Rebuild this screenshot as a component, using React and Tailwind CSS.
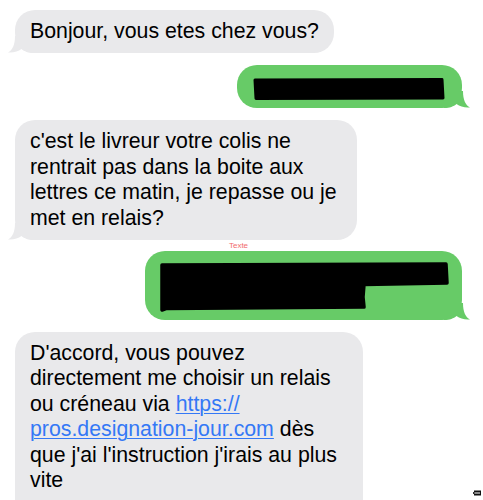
import React from 'react';

const GRAY = 'bg-[#e9e9eb]';
const GREEN = 'bg-[#67cb67]';

const Tail = ({ side, color }) => (
  <svg
    width="26"
    height="17"
    viewBox="0 0 26 17"
    className={
      side === 'left'
        ? 'absolute -left-[7px] bottom-0'
        : 'absolute -right-[8px] bottom-0 -scale-x-100'
    }
  >
    <path
      d="M7 0 C7 9 4.5 14 0 16.5 C5.5 17 10 15.5 13.5 13 C16.5 15.5 20 17 26 17 L26 0 Z"
      fill={color}
    />
  </svg>
);

const GrayBubble = ({ width, children }) => (
  <div
    className={`relative self-start rounded-[20px] ${GRAY} px-[15px] py-[9px] text-[21.3px] leading-[25.4px] text-black`}
    style={width ? { width } : undefined}
  >
    <Tail side="left" color="#e9e9eb" />
    <div className="relative">{children}</div>
  </div>
);

const GreenBubble = ({ width, height, children, pad }) => (
  <div
    className={`relative self-end rounded-[20px] ${GREEN} ${pad}`}
    style={{ width, height }}
  >
    <Tail side="right" color="#67cb67" />
    <div className="relative">{children}</div>
  </div>
);

const linkCls = 'text-[#3478f6] underline decoration-1 underline-offset-2';

export default function App() {
  return (
    <div
      className="relative h-[500px] w-full overflow-hidden bg-white"
      style={{ fontFamily: '"Liberation Sans", Arial, sans-serif' }}
    >
      <div className="flex flex-col pl-[15px] pr-[21px] pt-[10px]">
        <GrayBubble>Bonjour, vous etes chez vous?</GrayBubble>

        <div className="mt-[12px] flex flex-col">
          <GreenBubble width={225} height={43} pad="pl-[16px] pt-[13px]">
            <svg width="192" height="22" viewBox="0 0 192 22" className="block">
              <path
                d="M2 2 L189 1.5 L190 20 L3 20.5 Z"
                fill="#000"
                stroke="#000"
                strokeWidth="3"
                strokeLinejoin="round"
              />
            </svg>
          </GreenBubble>
        </div>

        <div className="mt-[12px] flex flex-col">
          <GrayBubble width={342}>
            c'est le livreur votre colis ne rentrait pas dans la boite aux lettres ce matin, je
            repasse ou je met en relais?
          </GrayBubble>
        </div>

        <div className="h-[11px] text-center text-[8px] leading-[11px] text-[#f26b6b]">Texte</div>

        <div className="flex flex-col">
          <GreenBubble width={317} height={69} pad="pl-[15px] pt-[11px]">
            <svg width="290" height="50" viewBox="0 0 290 50" className="block">
              <path
                d="M2 3 L286 2 L287 21 L204 22.5 L203 35 L204 45 L6 46.5 L2 48 Z"
                fill="#000"
                stroke="#000"
                strokeWidth="3.5"
                strokeLinejoin="round"
              />
            </svg>
          </GreenBubble>
        </div>

        <div className="mt-[12px] flex flex-col">
          <GrayBubble width={348}>
            <div>D'accord, vous pouvez</div>
            <div>directement me choisir un relais</div>
            <div>
              <span>ou créneau via </span>
              <a className={linkCls}>https://</a>
            </div>
            <div>
              <a className={linkCls}>pros.designation-jour.com</a>
              <span> dès</span>
            </div>
            <div>que j'ai l'instruction j'irais au plus</div>
            <div>vite</div>
            <div className="h-[30px]" />
          </GrayBubble>
        </div>
      </div>

      <svg width="8" height="6" viewBox="0 0 8 6" className="absolute right-[2px] bottom-[4px]">
        <rect x="1" y="0.5" width="7" height="5" fill="#111" />
        <path d="M0 3 L7 3" stroke="#fff" strokeWidth="1" />
        <path d="M0 3 L2 1.5 M0 3 L2 4.5" stroke="#111" strokeWidth="1" />
      </svg>
    </div>
  );
}
